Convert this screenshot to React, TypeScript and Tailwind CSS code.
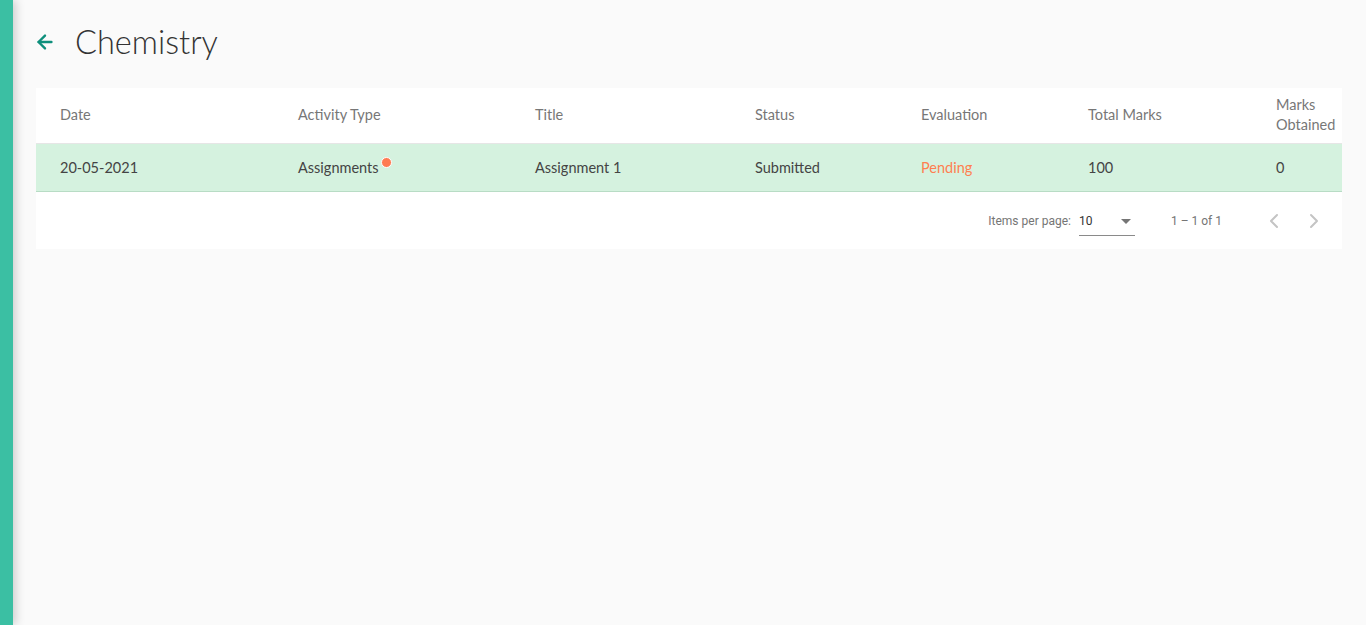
import { ArrowLeft, ChevronLeft, ChevronRight } from 'lucide-react';

const columns = [
  { label: 'Date', width: 'w-[262px]' },
  { label: 'Activity Type', width: 'w-[237px]' },
  { label: 'Title', width: 'w-[220px]' },
  { label: 'Status', width: 'w-[166px]' },
  { label: 'Evaluation', width: 'w-[167px]' },
  { label: 'Total Marks', width: 'w-[188px]' },
  { label: 'Marks Obtained', width: 'w-[66px]' },
];

export default function App() {
  return (
    <div className="flex min-h-[625px] w-full bg-[#fafafa] font-['Lato',sans-serif]">
      <div className="w-[13px] shrink-0 bg-[#3bbfa3] shadow-[3px_0_10px_rgba(0,0,0,0.18)]" />

      <main className="flex-1 pl-[23px] pr-[24px]">
        <div className="flex items-center h-[88px] pb-[4px]">
          <ArrowLeft className="w-[22px] h-[22px] text-[#0e8f7c] ml-[-2px]" strokeWidth={2.6} />
          <h1 className="ml-[19px] text-[32.5px] font-light text-[#333] leading-none">Chemistry</h1>
        </div>

        <div className="bg-white text-[14.5px]">
          {/* header */}
          <div className="flex items-center h-[56px] border-b border-[#e6e6e6] text-[#777] pb-[2px]">
            {columns.map((c, i) => (
              <div key={c.label} className={`${c.width} ${i === 0 ? 'pl-[24px]' : ''} leading-[20px]`}>
                {c.label === 'Marks Obtained' ? (
                  <>
                    Marks
                    <br />
                    Obtained
                  </>
                ) : (
                  c.label
                )}
              </div>
            ))}
          </div>

          {/* data row */}
          <div className="flex items-center h-[48px] bg-[#d5f2df] border-b border-[#b8dcc5] text-[#444]">
            <div className="w-[262px] pl-[24px]">20-05-2021</div>
            <div className="w-[237px]">
              <span className="relative">
                Assignments
                <span className="absolute -right-[13px] -top-[2px] w-[11px] h-[11px] rounded-full bg-[#ff7b52] border-[1.5px] border-white" />
              </span>
            </div>
            <div className="w-[220px]">Assignment 1</div>
            <div className="w-[166px]">Submitted</div>
            <div className="w-[167px] text-[#ff7f50]">Pending</div>
            <div className="w-[188px]">100</div>
            <div className="w-[66px]">0</div>
          </div>

          {/* paginator */}
          <div className="flex items-center justify-end h-[57px] font-['Roboto',sans-serif] text-[12px] text-[#757575]">
            <span>Items per page:</span>
            <div className="ml-[8px] w-[56px] h-[28px] flex items-center justify-between border-b border-[#8a8a8a] mt-[2px]">
              <span className="text-[#333] text-[12px]">10</span>
              <span className="mr-[4px] w-0 h-0 border-l-[5px] border-r-[5px] border-t-[5px] border-l-transparent border-r-transparent border-t-[#757575]" />
            </div>
            <span className="ml-[36px]">1 – 1 of 1</span>
            <div className="ml-[40px] flex items-center gap-[16px] mr-[16px]">
              <ChevronLeft className="w-[24px] h-[24px] text-[#c4c4c4]" strokeWidth={2} />
              <ChevronRight className="w-[24px] h-[24px] text-[#c4c4c4]" strokeWidth={2} />
            </div>
          </div>
        </div>
      </main>
    </div>
  );
}
